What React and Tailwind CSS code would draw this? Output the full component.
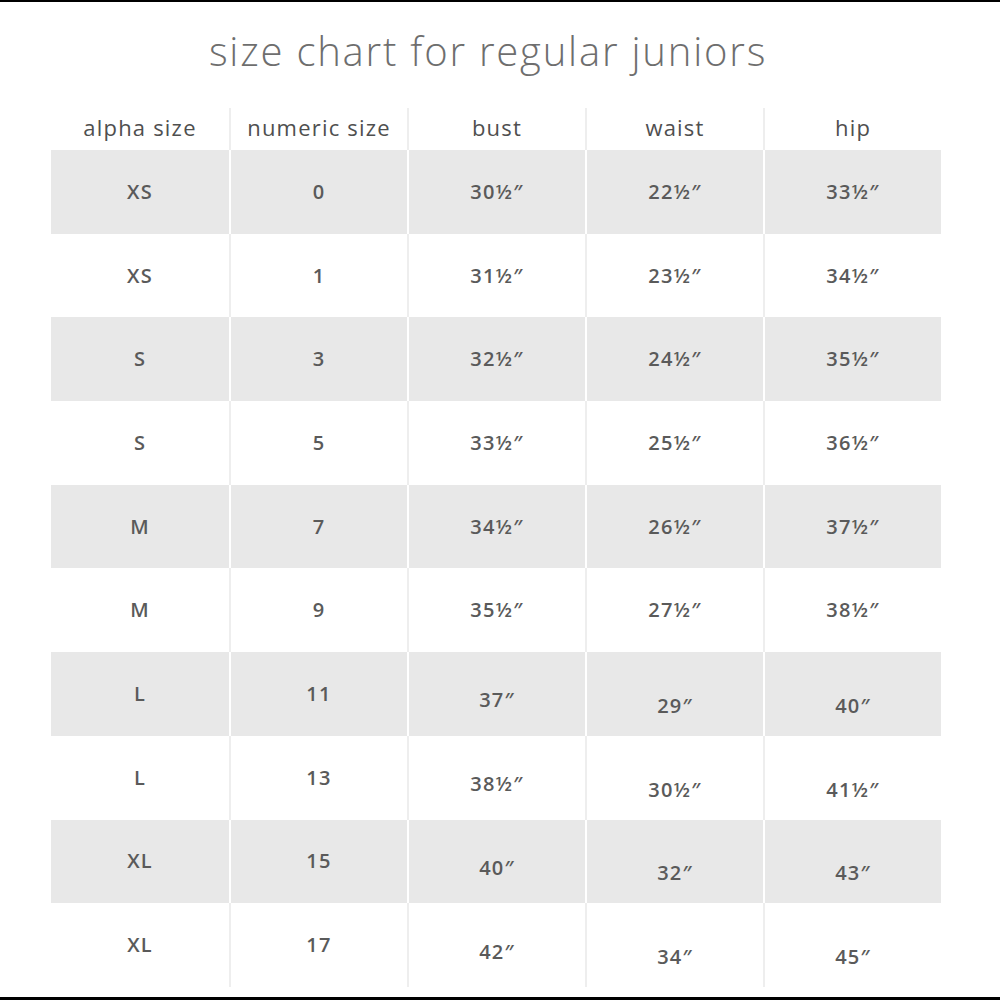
import React from 'react';

const headers = ['alpha size', 'numeric size', 'bust', 'waist', 'hip'];

// each cell: [text, downward offset in px]
const rows = [
  [['XS', 0], ['0', 0], ['30½″', 0], ['22½″', 0], ['33½″', 0]],
  [['XS', 0], ['1', 0], ['31½″', 0], ['23½″', 0], ['34½″', 0]],
  [['S', 0], ['3', 0], ['32½″', 0], ['24½″', 0], ['35½″', 0]],
  [['S', 0], ['5', 0], ['33½″', 0], ['25½″', 0], ['36½″', 0]],
  [['M', 0], ['7', 0], ['34½″', 0], ['26½″', 0], ['37½″', 0]],
  [['M', 0], ['9', 0], ['35½″', 0], ['27½″', 0], ['38½″', 0]],
  [['L', 0], ['11', 0], ['37″', 6], ['29″', 12], ['40″', 12]],
  [['L', 0], ['13', 0], ['38½″', 6], ['30½″', 12], ['41½″', 12]],
  [['XL', 0], ['15', 0], ['40″', 7], ['32″', 12], ['43″', 12]],
  [['XL', 0], ['17', 0], ['42″', 7], ['34″', 12], ['45″', 12]],
];

const font = { fontFamily: '"Open Sans", "DejaVu Sans", sans-serif' };

export default function App() {
  return (
    <div className="w-[1000px] h-[1000px] bg-white flex flex-col border-t-2 border-b-[3px] border-black" style={font}>
      <h1 className="text-center text-[40px] font-light text-[#6e6e6e] tracking-[1.8px] mt-[24px] leading-[50px] pr-[24px]">
        size chart for regular juniors
      </h1>

      <div className="ml-[51px] w-[890px] mt-[32px]">
        {/* header */}
        <div className="grid grid-cols-5 h-[42px]">
          {headers.map((h, i) => (
            <div
              key={h}
              className={`flex items-center justify-center pb-[4px] text-[22px] tracking-[1.2px] text-[#4f4f4f] ${i > 0 ? 'border-l-2 border-[#eeeeee]' : ''}`}
            >
              {h}
            </div>
          ))}
        </div>

        {rows.map((row, r) => {
          const gray = r % 2 === 0;
          return (
            <div key={r} className="grid grid-cols-5 h-[83.7px]">
              {row.map(([t, off], i) => (
                <div
                  key={i}
                  className={`flex items-center justify-center text-[20px] font-semibold tracking-[1.2px] text-[#5a5a5a] ${
                    gray ? 'bg-[#e8e8e8]' : 'bg-white'
                  } ${i > 0 ? (gray ? 'border-l-2 border-white' : 'border-l-2 border-[#eeeeee]') : ''}`}
                >
                  <span style={{ marginTop: off * 2 }}>{t}</span>
                </div>
              ))}
            </div>
          );
        })}
      </div>
    </div>
  );
}
